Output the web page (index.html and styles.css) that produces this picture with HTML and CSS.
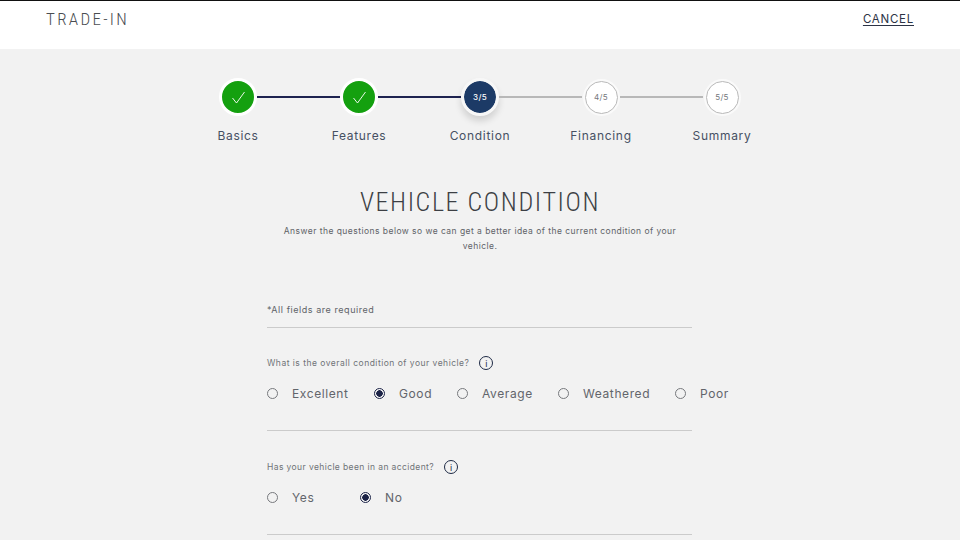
FILE: index.html
```html
<!DOCTYPE html>
<html lang="en">
<head>
<meta charset="utf-8">
<title>Trade-In</title>
<link rel="stylesheet" href="styles.css">
</head>
<body>
<header class="topbar">
  <span class="brand">TRADE-IN</span>
  <a class="cancel">CANCEL</a>
</header>
<main class="page">
  <ol class="stepper">
    <li class="step">
      <span class="dot done"><svg width="20" height="20" viewBox="0 0 20 20"><path d="M4.5 11 L8.5 16 L16.5 5" fill="none" stroke="#fff" stroke-width="0.9"/></svg></span>
      <span class="step-label">Basics</span>
    </li>
    <li class="link dark"></li>
    <li class="step">
      <span class="dot done"><svg width="20" height="20" viewBox="0 0 20 20"><path d="M4.5 11 L8.5 16 L16.5 5" fill="none" stroke="#fff" stroke-width="0.9"/></svg></span>
      <span class="step-label">Features</span>
    </li>
    <li class="link dark"></li>
    <li class="step">
      <span class="dot current">3/5</span>
      <span class="step-label">Condition</span>
    </li>
    <li class="link"></li>
    <li class="step">
      <span class="dot todo">4/5</span>
      <span class="step-label">Financing</span>
    </li>
    <li class="link"></li>
    <li class="step">
      <span class="dot todo">5/5</span>
      <span class="step-label">Summary</span>
    </li>
  </ol>

  <h1 class="title">VEHICLE CONDITION</h1>
  <p class="intro">Answer the questions below so we can get a better idea of the current condition of your vehicle.</p>

  <form class="form">
    <div class="required">*All fields are required</div>

    <div class="question q-first">
      <span class="q-text">What is the overall condition of your vehicle?</span>
      <span class="info">i</span>
    </div>
    <div class="options">
      <span class="option w-excellent"><span class="radio"></span>Excellent</span>
      <span class="option w-good"><span class="radio on"></span>Good</span>
      <span class="option w-average"><span class="radio"></span>Average</span>
      <span class="option w-weathered"><span class="radio"></span>Weathered</span>
      <span class="option"><span class="radio"></span>Poor</span>
    </div>
    <div class="rule"></div>

    <div class="question q-second">
      <span class="q-text">Has your vehicle been in an accident?</span>
      <span class="info">i</span>
    </div>
    <div class="options">
      <span class="option w-yes"><span class="radio"></span>Yes</span>
      <span class="option"><span class="radio on"></span>No</span>
    </div>
    <div class="rule"></div>
  </form>
</main>
</body>
</html>
```

FILE: styles.css
```css
* { box-sizing: border-box; }
html, body { margin: 0; padding: 0; height: 540px; overflow: hidden; }
body { background: #f2f2f2; font-family: "Inter", "Liberation Sans", sans-serif; color: #44484f; }

.topbar {
  height: 49px;
  background: #fff;
  border-top: 1px solid #111;
  padding: 0 46px;
  display: flex;
  justify-content: space-between;
  align-items: flex-start;
}
.brand {
  font-family: "Roboto", sans-serif;
  font-stretch: 75%;
  font-weight: 300;
  font-size: 17px;
  line-height: 18px;
  letter-spacing: 2.3px;
  color: #4a4d51;
  margin-top: 9px;
}
.cancel {
  font-size: 11.5px;
  line-height: 14px;
  letter-spacing: 0.75px;
  color: #2c3345;
  text-decoration: underline;
  text-underline-offset: 2px;
  margin-top: 11px;
}

.page { display: flex; flex-direction: column; align-items: center; }

.stepper {
  list-style: none;
  margin: 0;
  padding: 0;
  margin-top: 29px;
  display: flex;
  align-items: flex-start;
}
.step { width: 38px; display: flex; flex-direction: column; align-items: center; }
.dot {
  width: 38px; height: 38px;
  border-radius: 50%;
  border: 3px solid #fff;
  display: flex; align-items: center; justify-content: center;
  font-size: 8px;
  letter-spacing: 0.3px;
  flex: none;
}
.dot.done { background: #14a00f; }
.dot.current { background: #1c3a66; background-clip: padding-box; border-color: #f7f7f7; color: #fff; box-shadow: 0 5px 7px rgba(0,0,0,.14); font-weight: 500; }
.dot.todo { background: #fff; color: #74777c; width: 33px; height: 33px; margin: 2.5px 0; border: 1.5px solid #b9b9b9; box-shadow: 0 0 0 2px #fafafa; }
.step-label {
  margin-top: 12px;
  font-size: 12px;
  line-height: 16px;
  letter-spacing: 0.7px;
  color: #465063;
  white-space: nowrap;
}
.link { width: 83px; height: 1.5px; margin-top: 18px; background: #b8b8b8; }
.link.dark { height: 2px; background: #1e2350; }

.title {
  margin: 43px 0 0;
  font-family: "Roboto", sans-serif;
  font-stretch: 75%;
  font-weight: 300;
  font-size: 26px;
  line-height: 30px;
  letter-spacing: 1.6px;
  color: #3c3f44;
}
.intro {
  margin: 7px 0 0;
  width: 400px;
  text-align: center;
  font-size: 8.5px;
  line-height: 15px;
  letter-spacing: 0.46px;
  color: #606368;
}

.form { width: 425px; margin: 49px 1px 0 0; }
.required {
  height: 25px;
  font-size: 9px;
  line-height: 14px;
  letter-spacing: 0.55px;
  color: #606368;
  border-bottom: 1px solid #cbcbcb;
}
.question { display: flex; align-items: center; height: 16px; }
.q-first { margin-top: 27px; }
.q-second { margin-top: 28px; }
.q-text { font-size: 8.5px; letter-spacing: 0.49px; color: #6f7277; white-space: nowrap; }
.q-second .q-text { letter-spacing: 0.4px; }
.info {
  width: 14px; height: 14px;
  margin-left: 10px;
  border: 1px solid #1e2a45;
  border-radius: 50%;
  display: flex; align-items: center; justify-content: center;
  font-size: 9px;
  color: #1e2a45;
}
.options { display: flex; margin-top: 14px; height: 16px; align-items: center; white-space: nowrap; }
.option {
  flex: none;
  display: flex; align-items: center;
  font-size: 12px;
  letter-spacing: 0.6px;
  color: #62656b;
}
.radio {
  width: 11px; height: 11px;
  margin-right: 14px;
  border-radius: 50%;
  border: 1.5px solid #77797d;
  flex: none;
}
.radio.on { border-color: #1c2347; background: radial-gradient(circle, #1c2347 0 3px, #f6f6f6 3.5px); }
.w-excellent { width: 107px; }
.w-good { width: 83px; }
.w-average { width: 101px; }
.w-weathered { width: 117px; }
.w-yes { width: 93px; }
.rule { height: 1px; margin-top: 29px; background: #cbcbcb; }
```
